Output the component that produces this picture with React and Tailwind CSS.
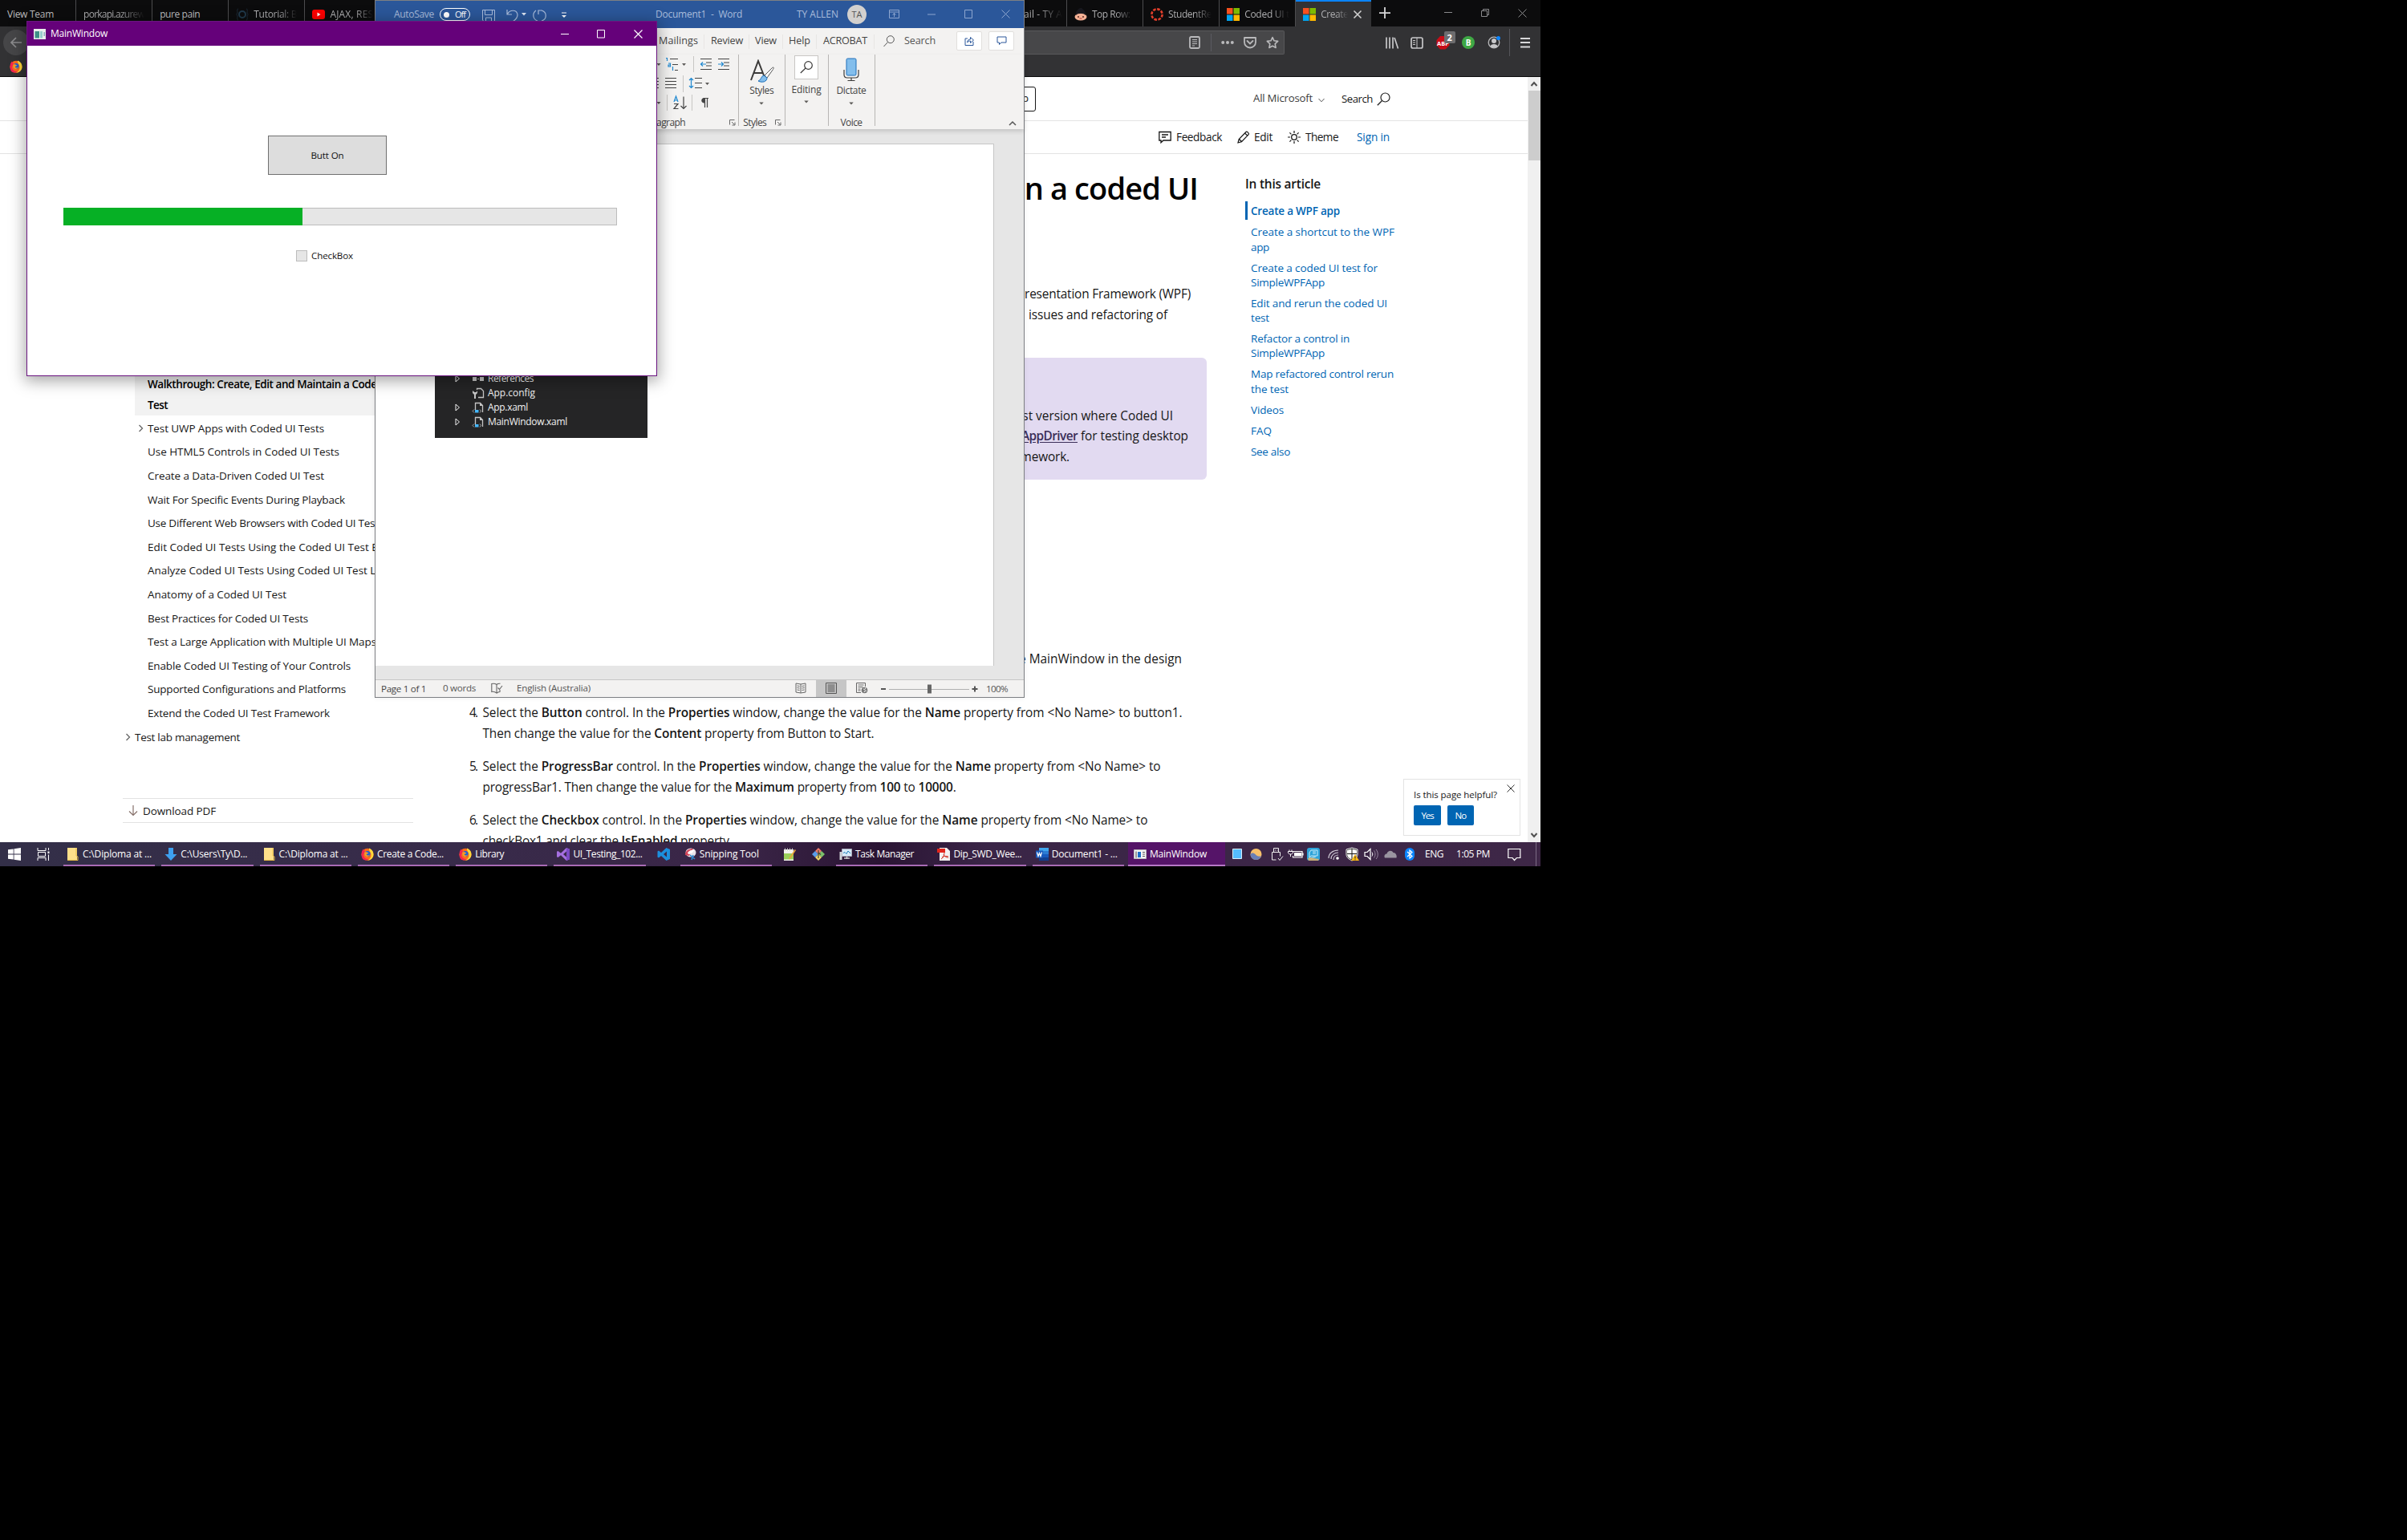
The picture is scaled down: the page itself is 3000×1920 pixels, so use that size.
import React, { useLayoutEffect, useRef } from "react";

/* Single-line text whose letter spacing is tuned so that it spans w pixels. */
function T({ w, className = "", children }) {
  const ref = useRef(null);
  useLayoutEffect(() => {
    const el = ref.current;
    if (!w || !el) return;
    el.style.letterSpacing = "0px";
    const natural = el.getBoundingClientRect().width;
    const n = el.textContent.length;
    el.style.letterSpacing = (w - natural) / n + "px";
  }, [w]);
  return (
    <span ref={ref} className={"inline-block shrink-0 whitespace-pre " + className}>
      {children}
    </span>
  );
}

function Svg({ w = 16, h = 16, vb, className = "", children }) {
  return (
    <svg width={w} height={h} viewBox={vb || `0 0 ${w} ${h}`} fill="none" className={"block shrink-0 " + className}>
      {children}
    </svg>
  );
}

const Firefox = ({ className }) => (
  <Svg className={className}>
    <circle cx="8" cy="8.3" r="7.5" fill="#ff6a1c" />
    <path d="M10 .6c4 1.4 6 5 5.400 9C14.800 13.500 11.500 15.800 8 15.800c3.500-1.800 5-4.500 4.500-7.500C12.200 5 9.500 4 10 .6z" fill="#ffd93a" />
    <path d="M.6 7C.8 4 2 2.500 3 1.500c0 1.500 1 2 2 2.500L3 9c.5 4 4 5.500 7 4.800-2 2-6 2.200-8 0C1 12.500.4 10 .6 7z" fill="#f5244f" />
    <circle cx="8" cy="7.600" r="3.500" fill="#1a62d8" />
    <path d="M4.500 5.500c2-.5 4 .2 5 1.500-1.500-.2-2 .7-3 1.300 1 1.500 3 1.500 4.500.3-.8 2.500-4.500 3.300-6 1.200-.9-1.300-1-3-.5-4.300z" fill="#ff9b1f" />
  </Svg>
);

const MsLogo = () => (
  <Svg>
    <path d="M0 0h7.500v7.500H0z" fill="#f7501e" />
    <path d="M8.500 0H16v7.500H8.500z" fill="#7fba00" />
    <path d="M0 8.500h7.500V16H0z" fill="#00a4ef" />
    <path d="M8.500 8.500H16V16H8.500z" fill="#ffb900" />
  </Svg>
);

const Caret = ({ className = "" }) => (
  <Svg w={6} h={4} className={className}>
    <path d="M.3.5h5.400L3 3.500z" fill="#5c5a58" />
  </Svg>
);

const Launcher = ({ className = "" }) => (
  <Svg w={8} h={8} className={className}>
    <path d="M.5 6.500v-6h6M3 3l3.500 3.500M7 3.500V7H3.500" stroke="#666" />
  </Svg>
);

const Chevron = () => (
  <Svg w={7} h={10} className="mr-[5px]">
    <path d="M1.500 1l4 4-4 4" stroke="#666" strokeWidth="1.300" />
  </Svg>
);

const fade = "bg-linear-to-r from-[#b4b4b6] from-60% to-transparent bg-clip-text text-transparent";

function Tab({ icon, label, w, plain }) {
  return (
    <div className="flex h-[33px] w-[95.100px] shrink-0 items-center overflow-hidden border-r border-[#4c4c4e] pt-[3px] pl-[9px]">
      {icon && <div className="mr-[6px]">{icon}</div>}
      <T w={w} className={plain ? "text-[#bdbdbf]" : fade}>{label}</T>
    </div>
  );
}

function BrowserChrome() {
  return (
    <>
      <div className="flex h-[33px] bg-[#0c0c0d] text-[12px]">
        <Tab label="View Team" w={58} plain />
        <Tab label="porkapi.azurew" w={76} />
        <Tab label="pure pain" w={50} plain />
        <Tab
          icon={
            <Svg>
              <path d="M3 1C1 1 2 4 2 6L.8 8 2 10c0 2-1 5 1 5M13 1c2 0 1 3 1 5l1.200 2L14 10c0 2 1 5-1 5" stroke="#1c2a36" />
              <circle cx="8" cy="8" r="4" stroke="#20394a" strokeWidth="2" />
            </Svg>
          }
          label="Tutorial: B"
          w={54}
        />
        <Tab
          icon={
            <Svg>
              <rect y="2" width="16" height="12" rx="3" fill="#f00" />
              <path d="M6.500 5.500v5l4-2.500z" fill="#fff" />
            </Svg>
          }
          label="AJAX, RES"
          w={54}
        />
        <div className="w-[759.500px] shrink-0" />
        <div className="flex w-[95px] shrink-0 items-center overflow-hidden border-r border-[#4c4c4e] pt-[3px] pl-[15px]">
          <T w={74} className={fade}>nt Mail - TY A</T>
        </div>
        <Tab
          icon={
            <Svg>
              <path d="M2 7c0-4 3-5 3.500-6C7-.5 10-.5 10.500 1.500 13 3 14 5 14 8z" fill="#17171d" />
              <ellipse cx="8" cy="11" rx="7.500" ry="4.500" fill="#f3b094" />
              <path d="M2 9c2-3 10-3 12 0V6H2z" fill="#17171d" />
              <circle cx="5" cy="11" r="1" fill="#5a2a22" />
              <circle cx="11" cy="11" r="1" fill="#5a2a22" />
              <path d="M6.500 13h3" stroke="#b5383a" />
            </Svg>
          }
          label="Top Row: "
          w={50}
        />
        <Tab
          icon={
            <Svg>
              <circle cx="8" cy="8" r="6.600" stroke="#e13f2b" strokeWidth="2.600" strokeDasharray="3.600 1.580" />
            </Svg>
          }
          label="StudentRe"
          w={54}
        />
        <Tab icon={<MsLogo />} label="Coded UI t" w={56} />
        <div className="flex w-[94px] shrink-0 items-center border-t-2 border-[#0a84ff] bg-[#323234] pt-[1px] pl-[9px]">
          <MsLogo />
          <T w={34} className={"ml-[6px] " + fade}>Create</T>
          <Svg w={12} h={12} className="ml-[6px]">
            <path d="M1.500 1.500l9 9M10.500 1.500l-9 9" stroke="#d0d0d0" strokeWidth="1.600" />
          </Svg>
        </div>
        <Svg w={14} h={33} className="ml-[10px]">
          <path d="M0 16.200h14M7 9v14" stroke="#d7d7d9" strokeWidth="1.800" />
        </Svg>
        <Svg w={104} h={33} className="ml-[67px]">
          <path d="M0 15.500h10" stroke="#8a8a8c" />
          <path d="M46.500 13.500h7v7h-7zM48.500 13v-1.500h7v7H54" stroke="#8a8a8c" />
          <path d="M92.500 11.500l10 10M102.500 11.500l-10 10" stroke="#8a8a8c" />
        </Svg>
      </div>
      <div className="flex h-[62px] bg-[#323234]">
        <div className="flex w-[1277px] flex-col">
          <div className="ml-[4px] mt-[4px] flex size-[32px] items-center justify-center rounded-full bg-[#464648]">
            <Svg>
              <path d="M15 8H2M8 2L2 8l6 6" stroke="#8b8b8d" strokeWidth="1.700" />
            </Svg>
          </div>
          <Firefox className="ml-[12px] mt-[6px]" />
        </div>
        <div className="mt-[5px] flex h-[30px] w-[324px] items-center rounded-r-[2px] border border-l-0 border-[#58585a] bg-[#474749]">
          <Svg className="ml-[204px]">
            <rect x="2" y="1" width="12" height="14" rx="1.500" stroke="#b9b9bb" strokeWidth="1.800" />
            <path d="M5 4.500h6M5 7h6M5 9.500h6M5 12h3" stroke="#b9b9bb" />
          </Svg>
          <div className="ml-[12px] h-[22px] w-px bg-[#5b5b62]" />
          <Svg className="ml-[12px]">
            <circle cx="2.200" cy="8" r="2" fill="#b9b9bb" />
            <circle cx="8" cy="8" r="2" fill="#b9b9bb" />
            <circle cx="13.800" cy="8" r="2" fill="#b9b9bb" />
          </Svg>
          <Svg className="ml-[12px]">
            <path d="M1 2h14v5.500a7 7 0 01-14 0z" stroke="#b9b9bb" strokeWidth="1.800" strokeLinejoin="round" />
            <path d="M4.500 6L8 9.500 11.500 6" stroke="#b9b9bb" strokeWidth="1.800" strokeLinecap="round" />
          </Svg>
          <Svg className="ml-[12px]">
            <path d="M8 1.500l2 4.300 4.700.6-3.500 3.200.9 4.900L8 12.200l-4.100 2.300.9-4.900L1.300 6.400 6 5.800z" stroke="#b9b9bb" strokeWidth="1.600" strokeLinejoin="round" />
          </Svg>
        </div>
        <Svg w={182} h={38} className="ml-[126px]">
          <path d="M1 13.500v14M5 13.500v14M9 13.500v14M11 14l4.500 13.500" stroke="#c7c7c9" strokeWidth="1.700" />
          <rect x="32" y="14" width="14" height="13" rx="2" stroke="#c7c7c9" strokeWidth="1.700" />
          <path d="M39 14v13M34 17.500h3M34 20h3M34 22.500h3" stroke="#c7c7c9" />
          <path d="M68 12h6.500l5 5v6.500l-5 5H68l-4.500-5V17z" fill="#c70d17" />
          <text x="64" y="23.500" fontSize="7.500" fontWeight="700" fill="#fff" fontFamily="Open Sans">ABP</text>
          <rect x="73" y="6" width="14" height="15" rx="2" fill="#6d6d6f" />
          <text x="76.500" y="17.500" fontSize="11" fontWeight="700" fill="#fff" fontFamily="Open Sans">2</text>
          <circle cx="103" cy="20" r="8" fill="#3fa845" />
          <text x="99.800" y="24" fontSize="10" fontWeight="700" fill="#fff" fontFamily="Open Sans">B</text>
          <circle cx="135" cy="20" r="6.800" stroke="#b9b9bb" strokeWidth="1.300" />
          <circle cx="135" cy="18" r="3" fill="#c7c7c9" />
          <path d="M130.500 25c0-4 9-4 9 0-2.500 2-6.500 2-9 0z" fill="#c7c7c9" />
          <circle cx="140.500" cy="14.500" r="2.500" fill="#0a84ff" />
          <path d="M154.500 3v34" stroke="#55555a" />
          <path d="M168 15h12M168 20h12M168 25.500h12" stroke="#d7d7d9" strokeWidth="2" />
        </Svg>
      </div>
      <div className="h-px bg-[#0c0c0d]" />
    </>
  );
}

const B = ({ children }) => <span className="font-semibold">{children}</span>;

const NAV = [
  ["Test UWP Apps with Coded UI Tests", 220, true],
  ["Use HTML5 Controls in Coded UI Tests", 239],
  ["Create a Data-Driven Coded UI Test", 220],
  ["Wait For Specific Events During Playback", 246],
  ["Use Different Web Browsers with Coded UI Tests", 294],
  ["Edit Coded UI Tests Using the Coded UI Test Editor", 317],
  ["Analyze Coded UI Tests Using Coded UI Test Logs", 306],
  ["Anatomy of a Coded UI Test", 173],
  ["Best Practices for Coded UI Tests", 200],
  ["Test a Large Application with Multiple UI Maps", 285],
  ["Enable Coded UI Testing of Your Controls", 253],
  ["Supported Configurations and Platforms", 247],
  ["Extend the Coded UI Test Framework", 227],
];

const TOC = [
  [["Create a shortcut to the WPF", 179], ["app", 23]],
  [["Create a coded UI test for", 158], ["SimpleWPFApp", 92]],
  [["Edit and rerun the coded UI", 170], ["test", 23]],
  [["Refactor a control in", 123], ["SimpleWPFApp", 92]],
  [["Map refactored control rerun", 178], ["the test", 47]],
  [["Videos", 41]],
  [["FAQ", 26]],
  [["See also", 49]],
];

function Sidebar() {
  return (
    <div className="w-[362px] shrink-0 pt-[264px] text-[13.500px] text-[#171717]">
      <div className="ml-[15px] flex h-[62px] flex-col items-start justify-end overflow-hidden bg-[#f2f2f2] pl-[16px] font-semibold text-black">
        <T w={310} className="leading-[25.500px]">Walkthrough: Create, Edit and Maintain a Coded UI</T>
        <T w={25} className="leading-[25.500px]">Test</T>
      </div>
      <div className="overflow-hidden pt-[1px]">
        {NAV.map(([label, w, sub]) => (
          <div key={label} className="flex h-[29.620px] items-center pl-[19px]">
            {sub ? <Chevron /> : <div className="w-[12px]" />}
            <T w={w}>{label}</T>
          </div>
        ))}
        <div className="flex h-[29.620px] items-center pl-[3px]">
          <Chevron />
          <T w={131}>Test lab management</T>
        </div>
      </div>
      <div className="mt-[61px] flex h-[31px] items-center border-y border-[#e3e3e3] pt-[2px] pl-[7px]">
        <Svg w={12} h={14}>
          <path d="M6 0v12.500M1 7.500l5 5 5-5" stroke="#86706a" strokeWidth="1.200" />
        </Svg>
        <T w={91} className="ml-[6px]">Download PDF</T>
      </div>
    </div>
  );
}

function Article() {
  return (
    <div className="flex w-[989px] shrink-0 flex-col overflow-hidden text-[15.400px] leading-[25.600px] text-[#171717]">
      <div className="mt-[15px] flex h-[56px] shrink-0 items-center justify-end pr-[11px] text-[38px] font-semibold text-black">
        <T w={226}>in a coded UI</T>
      </div>
      <div className="mt-[91px] flex shrink-0 flex-col">
        <div className="flex justify-end pr-[20px]"><T w={216}>Presentation Framework (WPF)</T></div>
        <div className="flex justify-end pr-[49px]"><T w={173}>issues and refactoring of</T></div>
      </div>
      <div className="mt-[41px] flex h-[152px] shrink-0 flex-col rounded-[6px] bg-[#e2daf1] pt-[59.500px]">
        <div className="flex justify-end pr-[42px]"><T w={200}>last version where Coded UI</T></div>
        <div className="flex justify-end pr-[23px]">
          <T w={70} className="font-semibold text-[#3b2e58] underline underline-offset-2">AppDriver</T>
          <T w={138}> for testing desktop</T>
        </div>
        <div className="flex justify-end pr-[171px]"><T w={81}>framework.</T></div>
      </div>
      <div className="mt-[211px] flex shrink-0 justify-end pr-[31px]"><T w={218}>the MainWindow in the design</T></div>
      <div className="mt-[41.500px] ml-[70px] grid shrink-0 grid-cols-[16.500px_1fr] gap-y-[15.800px]">
        <T w={13}>4.</T>
        <div className="flex flex-col items-start">
          <T w={872}>Select the <B>Button</B> control. In the <B>Properties</B> window, change the value for the <B>Name</B> property from &lt;No Name&gt; to button1.</T>
          <T w={488}>Then change the value for the <B>Content</B> property from Button to Start.</T>
        </div>
        <T w={13}>5.</T>
        <div className="flex flex-col items-start">
          <T w={845}>Select the <B>ProgressBar</B> control. In the <B>Properties</B> window, change the value for the <B>Name</B> property from &lt;No Name&gt; to</T>
          <T w={590}>progressBar1. Then change the value for the <B>Maximum</B> property from <B>100</B> to <B>10000</B>.</T>
        </div>
        <T w={13}>6.</T>
        <div className="flex flex-col items-start">
          <T w={829}>Select the <B>Checkbox</B> control. In the <B>Properties</B> window, change the value for the <B>Name</B> property from &lt;No Name&gt; to</T>
          <T w={311}>checkBox1 and clear the <B>IsEnabled</B> property.</T>
        </div>
      </div>
    </div>
  );
}

function Browser() {
  return (
    <div className="absolute top-0 left-0 flex h-[1050px] w-[1920px] flex-col overflow-hidden bg-white">
      <BrowserChrome />
      <div className="flex h-[954px]">
        <div className="flex w-[1904px] flex-col overflow-hidden">
          <div className="flex h-[55px] shrink-0 items-center border-b border-[#e3e3e3] text-[13.200px] text-[#171717]">
            <div className="flex h-[31px] w-[100px] items-center justify-end rounded-[3px] border border-[#171717] pr-[8px] ml-[1191px]">Sign up</div>
            <T w={74} className="ml-[271px] text-[#3c3c3c]">All Microsoft</T>
            <Svg w={8} h={6} className="ml-[7px] mt-[3px]">
              <path d="M.5 1L4 4.800 7.500 1" stroke="#555" />
            </Svg>
            <T w={39} className="ml-[21px] mt-[2px]">Search</T>
            <Svg w={17} h={17} className="ml-[5px]">
              <circle cx="10.500" cy="6.500" r="5.500" stroke="#222" strokeWidth="1.200" />
              <path d="M6.500 10.500L.8 16.200" stroke="#222" strokeWidth="1.300" />
            </Svg>
          </div>
          <div className="flex h-[41px] shrink-0 items-center border-b border-[#e3e3e3] text-[13.600px] text-[#171717]">
            <Svg className="ml-[1444px]">
              <path d="M.8 1.500h14.400v10.500H6L3 14.800V12H.8z" stroke="#171717" strokeWidth="1.300" />
              <path d="M4 5h8M4 8h5" stroke="#171717" strokeWidth="1.300" />
            </Svg>
            <T w={57} className="ml-[6px]">Feedback</T>
            <Svg className="ml-[19px]">
              <path d="M1 15l1.200-4.500 8.800-9c1-1 4.300 1.500 3.200 3.200L5.500 13.700zM9.500 3l3.200 3M2.500 10.500l3 3" stroke="#171717" strokeWidth="1.200" />
            </Svg>
            <T w={23} className="ml-[5px]">Edit</T>
            <Svg className="ml-[19px]">
              <circle cx="8" cy="8" r="3.300" stroke="#171717" strokeWidth="1.300" />
              <path d="M8 0v3M8 13v3M0 8h3M13 8h3M2.400 2.400l2 2M11.600 11.600l2 2M2.400 13.600l2-2M11.600 4.400l2-2" stroke="#171717" strokeWidth="1.200" />
            </Svg>
            <T w={41} className="ml-[6px]">Theme</T>
            <T w={41} className="ml-[23px] text-[#0065b3]">Sign in</T>
          </div>
          <div className="flex h-[858px] overflow-hidden pl-[153px]">
            <Sidebar />
            <Article />
            <div className="ml-[48px] w-[200px] shrink-0 pt-[25px] text-[13.500px] text-[#0065b3]">
              <T w={94} className="text-[15.400px] leading-[25px] font-semibold text-[#171717]">In this article</T>
              <div className="mt-[9px] flex h-[23px] items-center border-l-3 border-[#0065b3] pt-[1px] pl-[4px] font-semibold">
                <T w={111}>Create a WPF app</T>
              </div>
              <div className="flex flex-col pl-[7px] pt-[2.500px]">
                {TOC.map((lines, i) => (
                  <div key={i} className="flex flex-col items-start py-[3.850px] leading-[18.300px]">
                    {lines.map(([t, w]) => <T key={t} w={w}>{t}</T>)}
                  </div>
                ))}
              </div>
            </div>
          </div>
        </div>
        <div className="flex w-[16px] flex-col items-center bg-[#f0f0f0]">
          <Svg w={16} h={17}>
            <path d="M4.500 11L8 7l3.500 4" stroke="#505050" strokeWidth="2" />
          </Svg>
          <div className="h-[87px] w-[15px] bg-[#cdcdcd]" />
          <div className="flex-1" />
          <Svg w={16} h={17}>
            <path d="M4.500 6L8 10l3.500-4" stroke="#505050" strokeWidth="2" />
          </Svg>
        </div>
      </div>
      <div className="absolute top-[971px] left-[1749px] flex h-[71px] w-[146px] flex-col border border-[#e3e3e3] bg-white pl-[12px] text-[11.500px]">
        <div className="flex pt-[6px]">
          <T w={104} className="pt-[4px] font-medium text-[#171717]">Is this page helpful?</T>
          <Svg w={10} h={10} className="ml-[12px]">
            <path d="M.5.5l9 9M9.500.5l-9 9" stroke="#333" />
          </Svg>
        </div>
        <div className="mt-[5px] flex gap-[8px] text-white">
          <div className="flex h-[25px] w-[34px] items-center justify-center rounded-[2px] bg-[#0065b3]"><T w={15}>Yes</T></div>
          <div className="flex h-[25px] w-[33px] items-center justify-center rounded-[2px] bg-[#0065b3]"><T w={14}>No</T></div>
        </div>
      </div>
    </div>
  );
}

function TreeRow({ label, w, arrow, icon }) {
  return (
    <div className="flex h-[18px] items-center pl-[25px]">
      <Svg w={7} h={10}>{arrow && <path d="M1 1v8l4.500-4z" stroke="#f1f1f1" />}</Svg>
      <Svg className="ml-[14px]">{icon}</Svg>
      <T w={w} className="ml-[4px]">{label}</T>
    </div>
  );
}

const xamlIcon = (
  <>
    <path d="M4.500 11V2.500h6l3 3V14" stroke="#c5c5c5" strokeWidth="1.300" />
    <path d="M10 2v4h4z" fill="#c5c5c5" />
    <path d="M3 10.500L1 12.500l2 2M10 10.500l1.500 2-1.500 2" stroke="#aaa" />
    <path d="M4 11h4.500v3.500H4z" fill="#45b8ff" />
  </>
);

function WordWindow() {
  return (
    <div className="absolute top-0 left-[467px] isolate flex h-[870px] w-[810px] flex-col border border-[#7d7f83] bg-[#f3f2f1] shadow-[0_0_6px_rgba(0,0,0,0.08)]">
      <div className="flex h-[34px] shrink-0 items-center bg-[#2b579a] text-[12px] text-[#a9bcdb]">
        <T w={50} className="ml-[23px]">AutoSave</T>
        <div className="ml-[7px] flex h-[16px] w-[38px] items-center rounded-full border border-white pl-[4px] text-[11px] text-white">
          <div className="size-[7px] rounded-full bg-white" />
          <T w={13} className="ml-[7px]">Off</T>
        </div>
        <Svg w={17} h={16} className="mt-[4px] ml-[15px]">
          <path d="M.5.5h15v15H3L.5 13zM3.500.5v6h9v-6M4.500 15.500v-5.500h7v5.500" stroke="#a9bcdb" />
        </Svg>
        <Svg w={90} h={24} className="mt-[4px] ml-[12px]">
          <path d="M2 4v6h6M2.500 9.500C5 4 14 3.500 15 10c.5 4-3 7-6 9" stroke="#a9bcdb" strokeWidth="1.200" />
          <path d="M20 8h6l-3 3.500z" fill="#dde6f3" />
          <path d="M46 5h-5v5M45 5c7 2 7 11 0 13M38 5c-5 4-4 11 2 13" stroke="#a9bcdb" strokeWidth="1.200" />
          <path d="M70 8h6" stroke="#fff" />
          <path d="M70 11h6l-3 3z" fill="#fff" />
        </Svg>
        <T w={108} className="ml-[97px]">Document1  -  Word</T>
        <T w={52} className="ml-[68px]">TY ALLEN</T>
        <div className="ml-[11px] flex size-[24px] items-center justify-center rounded-full bg-[#d2d0ce] text-[11px] text-[#555]">TA</div>
        <Svg w={152} h={12} className="ml-[28px]">
          <path d="M.5.500h12v10H.5zM.5 3h12M6.500 9V4.500M4.500 6.500l2-2 2 2" stroke="#8ea6cf" />
          <path d="M48 6h10" stroke="#8ea6cf" />
          <path d="M94.500.500h9v10h-9z" stroke="#8ea6cf" />
          <path d="M140.500.500l10 10M150.500.500l-10 10" stroke="#8ea6cf" />
        </Svg>
      </div>
      <div className="flex h-[33px] shrink-0 items-center pl-[353px] text-[12.600px] text-[#444]">
        <T w={49}>Mailings</T>
        <div className="ml-[7px] h-[18px] w-px bg-[#e8e6e4]" />
        <T w={40} className="ml-[8px]">Review</T>
        <div className="ml-[7px] h-[18px] w-px bg-[#e8e6e4]" />
        <T w={27} className="ml-[7px]">View</T>
        <div className="ml-[7px] h-[18px] w-px bg-[#e8e6e4]" />
        <T w={27} className="ml-[7px]">Help</T>
        <div className="ml-[7px] h-[18px] w-px bg-[#e8e6e4]" />
        <T w={55} className="ml-[8px]">ACROBAT</T>
        <div className="ml-[8px] h-[18px] w-px bg-[#e8e6e4]" />
        <Svg w={14} h={15} className="ml-[11px]">
          <circle cx="8.800" cy="5.200" r="4.500" stroke="#555" />
          <path d="M5.500 8.500L.5 14" stroke="#555" />
        </Svg>
        <T w={39} className="ml-[12px] text-[#555]">Search</T>
        <div className="-mt-[2px] ml-[26px] flex h-[24px] w-[32px] items-center justify-center rounded-[2px] border border-[#e1dfdd] bg-white">
          <Svg w={13} h={13}>
            <path d="M4 4H1v8.500h10V8" stroke="#2b579a" />
            <path d="M3.500 9c.5-3 2-4 4-4V2.500L11.500 6 7.500 9.500V7c-2 0-3 .5-4 2z" stroke="#2b579a" />
          </Svg>
        </div>
        <div className="-mt-[2px] ml-[8px] flex h-[24px] w-[32px] items-center justify-center rounded-[2px] border border-[#e1dfdd] bg-white">
          <Svg w={13} h={12}>
            <path d="M1 1h11v7H6l-2.500 2.500V8H1z" stroke="#2b579a" />
          </Svg>
        </div>
      </div>
      <div className="relative z-10 flex h-[93px] shrink-0 bg-[#f3f2f1] pl-[348px] text-[12px] text-[#444] shadow-[0_3px_5px_rgba(0,0,0,0.14)]">
        <div className="flex h-[89px] w-[105px] flex-col border-r border-[#b8b6b4]">
          <Svg w={104} h={74} vb="816 68 104 74">
            <path d="M818.500 79h5l-2.500 3zM850 79h5l-2.500 3zM879 103h5l-2.500 3zM818.500 127h5l-2.500 3z" fill="#5c5a58" />
            <path d="M835 73.500h10M838 80.500h7M841 87.500h4M873 73.500h14M880 78h7M880 82h7M873 86.500h14M895 73.500h14M902 78h7M902 82h7M895 86.500h14" stroke="#444" />
            <path d="M819 97.500h2M819 101.500h2M819 105.500h2M819 109.500h2M829 97.500h14M829 101.500h14M829 105.500h14M829 109.500h14M866 97.500h9M866 103.500h9M866 109.500h9" stroke="#444" />
            <path d="M830 72.500h1.500v3.500M833 79h2.500v4h-2.500v-2h2.500M838.500 83v5M880 80h-6M876 77.500l-2.500 2.500 2.500 2.500M895 80h6M899 77.500l2.500 2.500-2.500 2.500M861.500 97.500v12M859 100l2.500-2.500L864 100M859 107l2.500 2.500L864 107" stroke="#2088d0" strokeWidth="1.200" />
            <path d="M864.500 70v20M851.500 94v21M831.500 118v20M862.500 118v20" stroke="#c8c6c4" />
            <path d="M840 127l2.500-7 2.500 7M841 125h3.500" stroke="#2088d0" strokeWidth="1.200" />
            <path d="M840 129.500h5l-5 6h5.500" stroke="#444" strokeWidth="1.200" />
            <path d="M852 120.500V135M848.500 132l3.500 3.500 3.500-3.500" stroke="#444" strokeWidth="1.200" />
            <path d="M883 122.500h-6.500M878.500 122v12M881.500 122v12" stroke="#444" strokeWidth="1.200" />
            <path d="M878 122c-5 0-5 6.500 0 6.500z" fill="#444" />
          </Svg>
          <div className="mt-[2px] flex h-[18px] items-center">
            <T w={53} className="-ml-[15px]">Paragraph</T>
            <Launcher className="ml-[55px]" />
          </div>
        </div>
        <div className="flex h-[89px] w-[57.500px] flex-col items-center border-r border-[#b8b6b4]">
          <Svg w={30} h={30} className="mt-[6px] ml-[2px]">
            <path d="M1 26L10 2l7 18M4.500 17h11" stroke="#3b3a39" strokeWidth="2" />
            <path d="M18 20l9-9c2-2 3-1 1.500 1.500L21 23z" stroke="#555" fill="#fff" />
            <path d="M17 20c-4 1-3 6-7 7 5 2.500 11 1 11-4z" fill="#83beec" stroke="#1e6fb8" />
          </Svg>
          <T w={30} className="leading-[18px]">Styles</T>
          <Caret className="mt-[5px]" />
          <div className="mt-auto -mb-[5px] flex items-center pl-[2px]">
            <T w={29}>Styles</T>
            <Launcher className="ml-[11px]" />
          </div>
        </div>
        <div className="flex h-[89px] w-[54px] flex-col items-center border-r border-[#b8b6b4]">
          <div className="mt-[1px] flex size-[30px] items-center justify-center border border-[#c8c6c4] bg-white">
            <Svg>
              <circle cx="10.500" cy="5.500" r="4.800" stroke="#3b3a39" strokeWidth="1.200" />
              <path d="M7 9L.8 15" stroke="#3b3a39" strokeWidth="1.200" />
            </Svg>
          </div>
          <T w={37} className="mt-[4px] leading-[18px]">Editing</T>
          <Caret className="mt-[4px]" />
        </div>
        <div className="flex h-[89px] w-[58px] flex-col items-center border-r border-[#b8b6b4]">
          <Svg w={20} h={29} className="mt-[4px]">
            <rect x="4" y="1" width="12" height="21" rx="1.500" fill="#83beec" stroke="#1e6fb8" />
            <path d="M1 15v6c0 3 2 4 4 4h10c2 0 4-1 4-4v-6M10 25v3.500M5.500 28.500h9" stroke="#3b3a39" strokeWidth="1.200" />
          </Svg>
          <T w={37} className="mt-[3px] leading-[18px]">Dictate</T>
          <Caret className="mt-[5px]" />
          <T w={27} className="mt-auto -mb-[5px]">Voice</T>
        </div>
        <Svg w={10} h={8} className="mt-[82px] ml-[166px]">
          <path d="M1 6l4-4 4 4" stroke="#555" strokeWidth="1.500" />
        </Svg>
      </div>
      <div className="flex h-[686px] shrink-0 bg-[#e6e6e6] pt-[18px]">
        <div className="h-[651px] w-[771px] border-t border-r border-[#c6c6c6] bg-white pt-[282px] pl-[74px]">
          <div className="flex h-[84px] w-[265px] flex-col bg-[#252526] pt-[1px] text-[12px] text-[#f1f1f1]">
            <TreeRow arrow label="References" w={57} icon={<path d="M1 6h5v5H1zM10 6h5v5h-5zM7 8h2v1H7z" fill="#c5c5c5" />} />
            <TreeRow
              label="App.config"
              w={59}
              icon={
                <>
                  <path d="M6.500 4V2.500h5l3 3v8H8" stroke="#c5c5c5" strokeWidth="1.300" />
                  <path d="M1 5v3l2 2v5h2v-5l2-2V5L5.500 7h-2z" fill="#c5c5c5" />
                </>
              }
            />
            <TreeRow arrow label="App.xaml" w={50} icon={xamlIcon} />
            <TreeRow arrow label="MainWindow.xaml" w={99} icon={xamlIcon} />
          </div>
        </div>
      </div>
      <div className="flex h-[22px] shrink-0 items-center border-t border-[#c6c6c6] text-[11.600px] text-[#555]">
        <T w={56} className="ml-[7px] mt-[1px] text-[#444]">Page 1 of 1</T>
        <T w={41} className="-mt-[1px] ml-[21px]">0 words</T>
        <Svg w={15} h={14} className="-mt-[1px] ml-[19px]">
          <path d="M7 2.500C5 1 3 1 .8 1.500v10c2-.5 4 0 6.200 1.500V2.500c1-1 2.500-1.300 4.500-1.200M7 13c1.500-1 2-1.300 4-1.500V9M8.500 6.500l2 2L14 4" stroke="#666" strokeWidth="1.100" />
        </Svg>
        <T w={92} className="-mt-[1px] ml-[17px]">English (Australia)</T>
        <Svg w={14} h={14} className="-mt-[1px] ml-[255px]">
          <path d="M7 2L1 1v11l6 1 6-1V1zM7 2v11M2.500 4l3 .5M2.500 6.500l3 .5M2.500 9l3 .5M11.500 4l-3 .5M11.500 6.500l-3 .5M11.500 9l-3 .5" stroke="#666" />
        </Svg>
        <div className="ml-[12px] flex h-[21px] w-[38px] items-center justify-center bg-[#c6c6c6]">
          <Svg w={14} h={14} className="-mt-[1px]">
            <path d="M.5.5h13v13H.5zM2.500 3h9M2.500 5h9M2.500 7h9M2.500 9h9M2.500 11h9" stroke="#555" />
          </Svg>
        </div>
        <Svg w={15} h={14} className="-mt-[1px] ml-[12px]">
          <path d="M6 12.500H.5V.5h11V5M2.500 3h7M2.500 5.500h6M2.500 8h3M2.500 10h3" stroke="#666" />
          <circle cx="10.500" cy="9.500" r="3.800" fill="#777" />
          <path d="M9 8l2 .5 1-2M10 12l1-2 2 .5" stroke="#eee" />
        </Svg>
        <Svg w={122} h={14} className="ml-[16px]">
          <path d="M0 7h6M113.500 7h7M117 3.500v7" stroke="#555" strokeWidth="2" />
          <path d="M10 7.500h100" stroke="#b0b0b0" />
          <path d="M58 1.500h5v11h-5z" fill="#666" />
        </Svg>
        <T w={27} className="ml-[9px]">100%</T>
      </div>
    </div>
  );
}

function MainWindow() {
  return (
    <div className="absolute top-[26px] left-[33px] flex h-[443px] w-[786px] flex-col border border-[#6b1580] bg-white shadow-[0_4px_18px_2px_rgba(0,0,0,0.35)]">
      <div className="flex h-[30px] shrink-0 items-center bg-[#65017a] text-[12px] text-white">
        <Svg w={16} h={13} className="ml-[8px]">
          <path d="M0 0h15v13H0z" fill="#e9efec" />
          <path d="M1.500 3h5.500v8.500H1.500z" fill="#3d8f86" />
          <path d="M8 3h3v8.500H8z" fill="#9cc" />
          <path d="M12.500 4h1.500v5h-1.500z" fill="#8ab" />
        </Svg>
        <T w={71} className="ml-[5px]">MainWindow</T>
        <Svg w={102} h={11} className="ml-[565px]">
          <path d="M0 5.500h10" stroke="#fff" />
          <path d="M45.500.5h9v9.500h-9z" stroke="#fff" />
          <path d="M91.500.5l10 10M101.500.5l-10 10" stroke="#fff" strokeWidth="1.200" />
        </Svg>
      </div>
      <div className="flex flex-1 flex-col text-[11.600px] text-[#111]">
        <div className="mt-[112px] ml-[300px] flex h-[49px] w-[148px] items-center justify-center border border-[#707070] bg-[#ddd]">
          <T w={41}>Butt On</T>
        </div>
        <div className="mt-[41px] ml-[45px] flex h-[22px] w-[690px] border border-[#bcbcbc] bg-[#e6e6e6]">
          <div className="-my-px -ml-px w-[298px] bg-[#06b025]" />
        </div>
        <div className="mt-[28px] ml-[335px] flex h-[19px] items-center">
          <div className="size-[14px] border border-[#bcbcbc] bg-[#e6e6e6]" />
          <T w={52} className="ml-[5px]">CheckBox</T>
        </div>
      </div>
    </div>
  );
}

const Folder = () => (
  <Svg>
    <path d="M1 0h12v16H1z" fill="#ffe08a" />
    <path d="M1 15.500h13V11l-2-1V0" stroke="#e8bd45" />
  </Svg>
);

function Task({ icon, label, w, className = "mr-[8px]" }) {
  return (
    <div className={"flex h-[30px] w-[114.300px] shrink-0 items-center border-b-2 border-[#a96bb5] pt-[2px] pl-[4px] " + className}>
      {icon}
      <T w={w} className="ml-[4px]">{label}</T>
    </div>
  );
}

function Taskbar() {
  return (
    <div className="absolute top-[1050px] left-0 flex h-[30px] w-[1920px] items-center bg-[linear-gradient(90deg,#332f48_0%,#382b4a_30%,#3a2547_48%,#2a1433_57%,#3a2547_64%,#3e2747_100%)] text-[12px] text-white">
      <Svg className="ml-[10px]">
        <path d="M0 2.300L6.700 1.400v6.200H0zM7.500 1.200L16 0v7.600H7.500zM0 8.400h6.700v6.200L0 13.700zM7.500 8.400H16V16l-8.500-1.200z" fill="#fff" />
      </Svg>
      <Svg className="ml-[20px]">
        <path d="M1 0v3.500h10V0M1 16v-3.500h10V16M1.500 5.500h9v5h-9zM14.500 0v3M14.500 8.500V16" stroke="#fff" />
        <path d="M13.500 4.500h2v2.500h-2z" fill="#fff" />
      </Svg>
      <Task className="ml-[17px] mr-[8px]" icon={<Folder />} label="C:\Diploma at ..." w={86} />
      <Task icon={<Svg><path d="M5 0h6v8h4.500L8 16 .5 8H5z" fill="#3ea0f0" /></Svg>} label="C:\Users\Ty\D..." w={83} />
      <Task icon={<Folder />} label="C:\Diploma at ..." w={86} />
      <Task icon={<Firefox />} label="Create a Code..." w={83} />
      <Task icon={<Firefox />} label="Library" w={36} />
      <Task
        className="mr-[14px]"
        icon={
          <Svg>
            <path d="M12 0l4 1.700v12.600L12 16 5 9.300 1.500 12 0 11.200V4.800L1.500 4 5 6.700zM12 4.500L8 8l4 3.500z" fillRule="evenodd" fill="#a56fe0" />
            <path d="M12 0l4 1.700v12.600L12 16z" fill="#7b4bc4" />
          </Svg>
        }
        label="UI_Testing_102..."
        w={86}
      />
      <Svg className="mr-[13px]">
        <path d="M11.500 0L16 2v12l-4.500 2L5 10 2 12.500.5 11.500v-7L2 3.500 5 6zM12 4.500L8 8l4 3.500z" fillRule="evenodd" fill="#1c8fdd" />
      </Svg>
      <Task
        className="mr-[14px]"
        icon={
          <Svg>
            <ellipse cx="9" cy="6" rx="6.500" ry="5.500" fill="#e9e4ea" />
            <path d="M2 9C2 3 7 1 12 1l-5 9z" fill="#d5455a" />
            <path d="M5 6c2-3 6-4 8-3-1 3-4 5-7 5z" fill="#fff" />
            <path d="M8 9l6 5M12 9l-2 6" stroke="#2a8ad0" strokeWidth="1.600" />
          </Svg>
        }
        label="Snipping Tool"
        w={74}
      />
      <Svg className="mr-[20px]">
        <path d="M1 2h12v14H1z" fill="#f4f4ee" />
        <path d="M1 7h12v7.500H1z" fill="#9bd05a" />
        <path d="M2.500.5v3M5.500.5v3M8.500.5v3M11.500.5v3" stroke="#ccc" />
        <path d="M14.500 2L8 12l-1 2.500L9.500 13 16 3z" fill="#e8a53a" />
      </Svg>
      <Svg className="mr-[14px]">
        <path d="M8 0l4 4-4 4-4-4z" fill="#f07a6a" />
        <path d="M4 4l4 4-4 4-4-4z" fill="#5a9be8" />
        <path d="M12 4l4 4-4 4-4-4z" fill="#7cc06a" />
        <path d="M8 8l4 4-4 4-4-4z" fill="#f2d76a" />
        <path d="M8 3v10M8 6l3 2.500" stroke="#443" strokeWidth="1.200" />
      </Svg>
      <Task
        icon={
          <Svg>
            <path d="M3.500 1.500h12v9h-12z" fill="#d8ecf8" stroke="#aab" />
            <path d="M5 6.500l2-1 2 2 2-3.500 3 3" stroke="#1f7fb8" />
            <path d="M.5 5h3v10h-3z" fill="#cfd3d6" />
            <path d="M6 13h7M9.500 11v3" stroke="#ccc" strokeWidth="1.500" />
          </Svg>
        }
        label="Task Manager"
        w={73}
      />
      <Task
        icon={
          <Svg>
            <path d="M3 0h9l4 4v12H3z" fill="#f3f1f0" />
            <path d="M0 1h10v5H0z" fill="#e2261c" />
            <path d="M9 6c0 4-2 7-4 8M8 8c1 3 3 4 6 4M6 12c3-2 5-2 8-1" stroke="#d3392e" />
          </Svg>
        }
        label="Dip_SWD_Wee..."
        w={85}
      />
      <Task
        className="mr-[5px]"
        icon={
          <Svg>
            <path d="M4 0h12v4H4z" fill="#41a5ee" />
            <path d="M4 4h12v4H4z" fill="#2b7cd3" />
            <path d="M4 8h12v4H4z" fill="#185abd" />
            <path d="M4 12h12v4H4z" fill="#103f91" />
            <path d="M0 3.500h9v9H0z" fill="#185abd" />
            <path d="M1.500 5.500l1.500 5 1.500-4 1.500 4 1.500-5" stroke="#fff" strokeWidth="1.200" />
          </Svg>
        }
        label="Document1 - ..."
        w={82}
      />
      <div className="flex h-[30px] w-[121px] items-center border-b-2 border-[#b777c6] bg-[#551468] pt-[2px] pl-[7px]">
        <Svg>
          <path d="M.5 2.500h15v11H.5z" fill="#f4f4f4" stroke="#bbb" />
          <path d="M5 5h4v7H5z" fill="#1e6fc8" />
          <path d="M11 5.500h3M11 8h3M11 10.500h3" stroke="#555" />
          <path d="M2 4.500h2v8H2z" fill="#9a9a9a" />
        </Svg>
        <T w={71} className="ml-[4px]">MainWindow</T>
      </div>
      <Svg w={232} h={18} className="ml-[9px]">
        <path d="M.5 2.500h11v12H.5z" fill="#55bdff" stroke="#d8eefc" />
        <circle cx="29.500" cy="9" r="7" fill="#f7c06a" />
        <path d="M22.500 9c3-3 5-1 7 1s5 2 6.500 1c-1 3-3.500 5-6.500 5-4 0-7-3-7-7z" fill="#6a7fb5" />
        <path d="M51.500 1.500h6v5h-6zM49.500 6.500h10v5M49.500 6.500V16h5M57 14l2 2.500 4-5M53 4h1M55.500 4h1" stroke="#eee" />
        <path d="M75.500 5.500h11.500v7.500H75.500v-2M88 7.500v3" stroke="#fff" strokeWidth="1.200" />
        <path d="M77 7h9v4.500h-9z" fill="#fff" />
        <path d="M71 3.500v2M74 3.500v2M69.500 5.500h6v2c-1 2-5 2-6 0zM72.500 9v3" stroke="#fff" />
        <rect x="93" y="1" width="16" height="16" rx="3" fill="#2da3da" />
        <path d="M98 4h8v7h-8l-2 2V7zM100 6h4M100 8h4M96 14l8-2" stroke="#c8ecfa" />
        <path d="M94 14c3-2 8 0 14 1l-1 2H95z" fill="#c9b07a" />
        <path d="M120 14c0-6 5-10 12-10M123 15c0-5 4-8 9-8M126 16c0-4 3-6 6-6" stroke="#cfc8d4" strokeWidth="1.200" />
        <circle cx="131" cy="14" r="1.800" fill="#fff" />
        <path d="M149 1l7 2v6c0 4-3 6-7 8-4-2-7-4-7-8V3z" fill="#111" stroke="#fff" />
        <path d="M148.500 2.500V8H143V4zM149.500 9h5.500c0 3-2 5-5.500 6.500z" fill="#fff" />
        <path d="M149.500 2.500V8h5.500V4zM148.500 9H143c0 3 2 5 5.500 6.500z" fill="#fff" />
        <path d="M153 9l5 8h-10z" fill="#fdb913" />
        <path d="M153 11.500v3M153 15.300v1" stroke="#222" />
        <path d="M165 6.500h3l4-4v13l-4-4h-3z" stroke="#fff" strokeWidth="1.200" />
        <path d="M174 6.500c1 1.500 1 3.500 0 5" stroke="#fff" />
        <path d="M176.500 4.500c2 2.500 2 6.500 0 9M179 3c3 3.500 3 9 0 12" stroke="#9a8ca2" />
        <path d="M190 13.500c-1.500-3 .5-5 2.500-5 1-4 6-5 8-1.500 3 0 5 3.500 4 6.500z" fill="#9a94a0" />
        <rect x="215" y="1" width="12" height="16" rx="6" fill="#0a84ff" />
        <path d="M218 6l6 5.500-3 2.500V4l3 2.500-6 5.500" stroke="#fff" strokeWidth="1.200" />
      </Svg>
      <T w={23} className="ml-[8px]">ENG</T>
      <T w={42} className="ml-[16px]">1:05 PM</T>
      <Svg w={17} h={18} className="ml-[22px]">
        <path d="M.8 2.500h15v11h-4.500L8.500 16.500 6 13.500H.8z" stroke="#fff" strokeWidth="1.200" />
      </Svg>
      <div className="ml-[18px] h-[30px] w-px bg-[#7b6b84]" />
    </div>
  );
}

export default function App() {
  return (
    <div className="relative h-[1920px] w-[3000px] overflow-hidden bg-black font-['Open_Sans','Noto_Sans',sans-serif]">
      <Browser />
      <WordWindow />
      <MainWindow />
      <Taskbar />
    </div>
  );
}
